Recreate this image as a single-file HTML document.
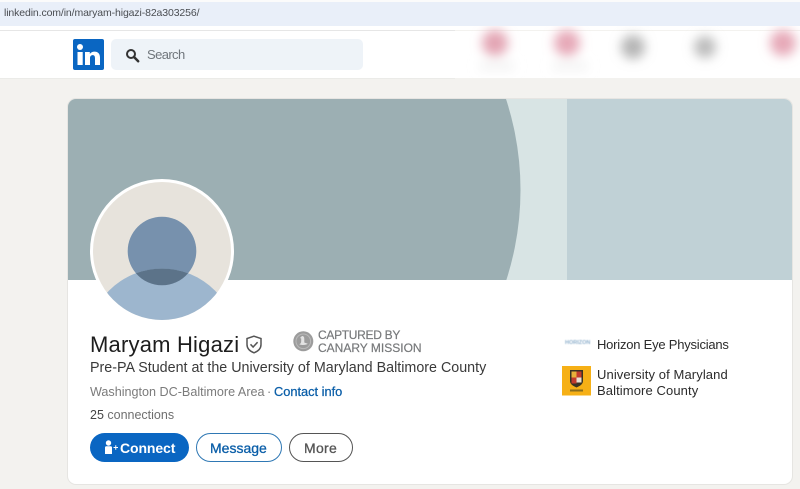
<!DOCTYPE html>
<html>
<head>
<meta charset="utf-8">
<style>
html,body{margin:0;padding:0}
body{width:800px;height:489px;position:relative;overflow:hidden;background:#f3f2ef;font-family:"Liberation Sans",sans-serif}
.a{position:absolute;white-space:nowrap}
</style>
</head>
<body>
<div class="a" style="left:0;top:0;width:800px;height:2px;background:#fbfbfb"></div>
<div class="a" style="left:0;top:2px;width:800px;height:24px;background:#e9eff9"></div>
<div class="a" style="left:0;top:26px;width:800px;height:4px;background:#fff"></div>
<div class="a" style="left:0;top:30px;width:455px;height:1px;background:#e6e6e6"></div>
<div class="a" style="left:0;top:31px;width:800px;height:47px;background:#fff"></div>
<div class="a" style="left:0;top:78px;width:455px;height:1px;background:#ebebe8"></div>
<div class="a" style="left:4px;top:7px;font-size:10.500px;line-height:13px;color:#4a4d52;letter-spacing:-.12px">linkedin.com/in/maryam-higazi-82a303256/</div>

<svg class="a" style="left:73px;top:39px" width="32" height="31" viewBox="0 0 32 31">
<rect width="31" height="31" rx="2" fill="#0a66c2"/>
<circle cx="7" cy="8" r="3" fill="#fff"/>
<rect x="4.500" y="13" width="5.200" height="13" fill="#fff"/>
<path d="M12 13h4.800v2c1-1.500 2.600-2.400 4.700-2.400 3.700 0 5.500 2.400 5.500 6V26h-5v-6.900c0-1.900-.7-3-2.300-3-1.700 0-2.700 1.200-2.700 3.100V26h-5z" fill="#fff"/>
</svg>

<div class="a" style="left:111px;top:39px;width:252px;height:31px;border-radius:5px;background:#eef3f8"></div>
<svg class="a" style="left:125px;top:48px" width="15" height="15" viewBox="0 0 15 15">
<circle cx="6" cy="6" r="4" fill="none" stroke="#333" stroke-width="2"/>
<path d="M9 9l4.200 4.200" stroke="#333" stroke-width="2.500" stroke-linecap="round"/>
</svg>
<div class="a" style="left:147px;top:47px;font-size:13px;line-height:16px;color:#70767c;letter-spacing:-.6px">Search</div>

<svg class="a" style="left:455px;top:26px" width="345" height="53" viewBox="0 0 345 53">
<defs><filter id="b" x="-10%" y="-50%" width="120%" height="200%"><feGaussianBlur stdDeviation="5.500"/></filter></defs>
<g filter="url(#b)">
<circle cx="40" cy="17" r="13" fill="#e3a5b4"/>
<circle cx="112" cy="17" r="13" fill="#e6a8b7"/>
<circle cx="178" cy="21" r="12" fill="#b5b5b5"/>
<circle cx="250" cy="21" r="11" fill="#bbbbbb"/>
<circle cx="328" cy="17" r="13" fill="#e6a8b7"/>
<rect x="25" y="36" width="34" height="8" fill="#f2f2f2"/>
<rect x="98" y="36" width="34" height="8" fill="#f2f2f2"/>
</g>
</svg>

<div class="a" style="left:68px;top:99px;width:724px;height:385px;border-radius:8px;background:#fff;box-shadow:0 0 0 1px #e6e5e2;overflow:hidden">
<svg style="position:absolute;left:0;top:0" width="724" height="181" viewBox="0 0 724 181">
<rect width="724" height="181" fill="#c0d1d6"/>
<rect width="499" height="181" fill="#d8e4e4"/>
<circle cx="159.700" cy="91" r="292.800" fill="#9cafb3"/>
</svg>
</div>

<svg class="a" style="left:88px;top:177px" width="148" height="147" viewBox="88 177 148 147">
<defs>
<clipPath id="c"><circle cx="162" cy="251" r="69"/></clipPath>
</defs>
<circle cx="162" cy="251" r="72" fill="#fff"/>
<circle cx="162" cy="251" r="69" fill="#e7e3dc"/>
<g clip-path="url(#c)">
<circle cx="162" cy="251" r="34.300" fill="#7791ad"/>
<circle cx="162" cy="343.600" r="75" fill="#9db6ce"/>
<path d="M135.920 273.280A75 75 0 0 1 188.080 273.280A34.300 34.300 0 0 1 135.920 273.280z" fill="#5c7389"/>
</g>
</svg>

<div class="a" style="left:90px;top:331px;font-size:22px;line-height:28px;color:#1d1d1d;letter-spacing:.2px">Maryam Higazi</div>
<svg class="a" style="left:245px;top:335px" width="18" height="19" viewBox="0 0 18 19">
<path d="M9 1.200l7 2.300v6c0 3.900-2.800 6.700-7 8.300-4.200-1.600-7-4.400-7-8.300v-6z" fill="none" stroke="#555" stroke-width="1.500"/>
<path d="M5.500 9.300l2.600 2.700 4.500-4.800" fill="none" stroke="#555" stroke-width="1.500"/>
</svg>

<svg class="a" style="left:293px;top:331px" width="21" height="21" viewBox="0 0 21 21">
<circle cx="10.300" cy="10.300" r="10" fill="#9c9c9c"/>
<circle cx="10.300" cy="10.300" r="7.300" fill="none" stroke="#b9b9b9" stroke-width="1"/>
<path d="M9 5c1.800 0 2.300 1.200 2.300 3v3.500c1 .5 2.500.8 3.500 1.300-1.500 1.500-6.500 1.600-8.500.5 1.300-.6 1.900-1.500 1.900-3.300V7.500L7 7z" fill="#e3e3e3"/>
</svg>
<div class="a" style="left:318px;top:329px;font-size:12px;line-height:13px;color:#77797b;-webkit-text-stroke:.2px #77797b"><span style="letter-spacing:-.3px">CAPTURED BY</span><br>CANARY MISSION</div>

<div class="a" style="left:90px;top:360px;font-size:14.300px;line-height:17px;color:#3a3a3a">Pre-PA Student at the University of Maryland Baltimore County</div>
<div class="a" style="left:90px;top:384px;font-size:12.600px;line-height:16px;color:#7b7b7b">Washington DC-Baltimore Area</div>
<div class="a" style="left:267px;top:384px;font-size:12.600px;line-height:16px;color:#7b7b7b">·</div>
<div class="a" style="left:274px;top:384px;font-size:12.800px;line-height:16px;color:#0a5ea8;-webkit-text-stroke:.25px #0a5ea8">Contact info</div>
<div class="a" style="left:90px;top:407px;font-size:12.500px;line-height:16px;color:#6f6f6f"><span style="color:#444">25</span> connections</div>

<div class="a" style="left:90px;top:433px;width:99px;height:29px;border-radius:15px;background:#0a66c2"></div>
<svg class="a" style="left:104px;top:440px" width="15" height="15" viewBox="0 0 15 15">
<circle cx="4.500" cy="3" r="2.700" fill="#fff"/>
<path d="M1 7.500q0-1.300 1.300-1.300h4.400q1.300 0 1.300 1.300V14H1z" fill="#fff"/>
<path d="M9.500 7.500h4.500M11.750 5.300v4.400" stroke="#fff" stroke-width="1"/>
</svg>
<div class="a" style="left:120px;top:440px;font-size:14px;line-height:16px;font-weight:700;color:#fff;letter-spacing:-.1px">Connect</div>

<div class="a" style="left:196px;top:433px;width:84px;height:27px;border-radius:15px;border:1px solid #2f78b4;background:#fff"></div>
<div class="a" style="left:210px;top:440px;font-size:14px;line-height:16px;color:#0a5ea8;-webkit-text-stroke:.3px #0a5ea8">Message</div>

<div class="a" style="left:289px;top:433px;width:62px;height:27px;border-radius:15px;border:1px solid #555;background:#fff"></div>
<div class="a" style="left:304px;top:440px;font-size:14px;line-height:16px;color:#555;-webkit-text-stroke:.3px #555;letter-spacing:.3px">More</div>

<div class="a" style="left:565px;top:340px;font-size:5.500px;line-height:7px;font-weight:700;color:#8fb0cc;filter:blur(.4px)">HORIZON</div>
<div class="a" style="left:597px;top:337px;font-size:13px;line-height:16px;color:#2b2b2b;letter-spacing:-.22px">Horizon Eye Physicians</div>

<svg class="a" style="left:562px;top:366px" width="29" height="30" viewBox="0 0 29 30">
<rect width="29" height="29.500" fill="#f6b016"/>
<path d="M8 4h13v11c0 3-3 5-6.500 6.500C11 20 8 18 8 15z" fill="#3a3323"/>
<rect x="14.500" y="5.500" width="5" height="6" fill="#c23b2e"/>
<rect x="9.500" y="11.500" width="5" height="6" fill="#c23b2e"/>
<rect x="9.500" y="5.500" width="5" height="6" fill="#e8b13a"/>
<rect x="14.500" y="11.500" width="5" height="5" fill="#e8e2d4"/>
<rect x="8" y="23.500" width="13" height="2" fill="#8a6d1c"/>
</svg>
<div class="a" style="left:597px;top:367px;font-size:13px;line-height:16px;color:#2b2b2b;letter-spacing:.1px">University of Maryland<br>Baltimore County</div>
</body>
</html>
